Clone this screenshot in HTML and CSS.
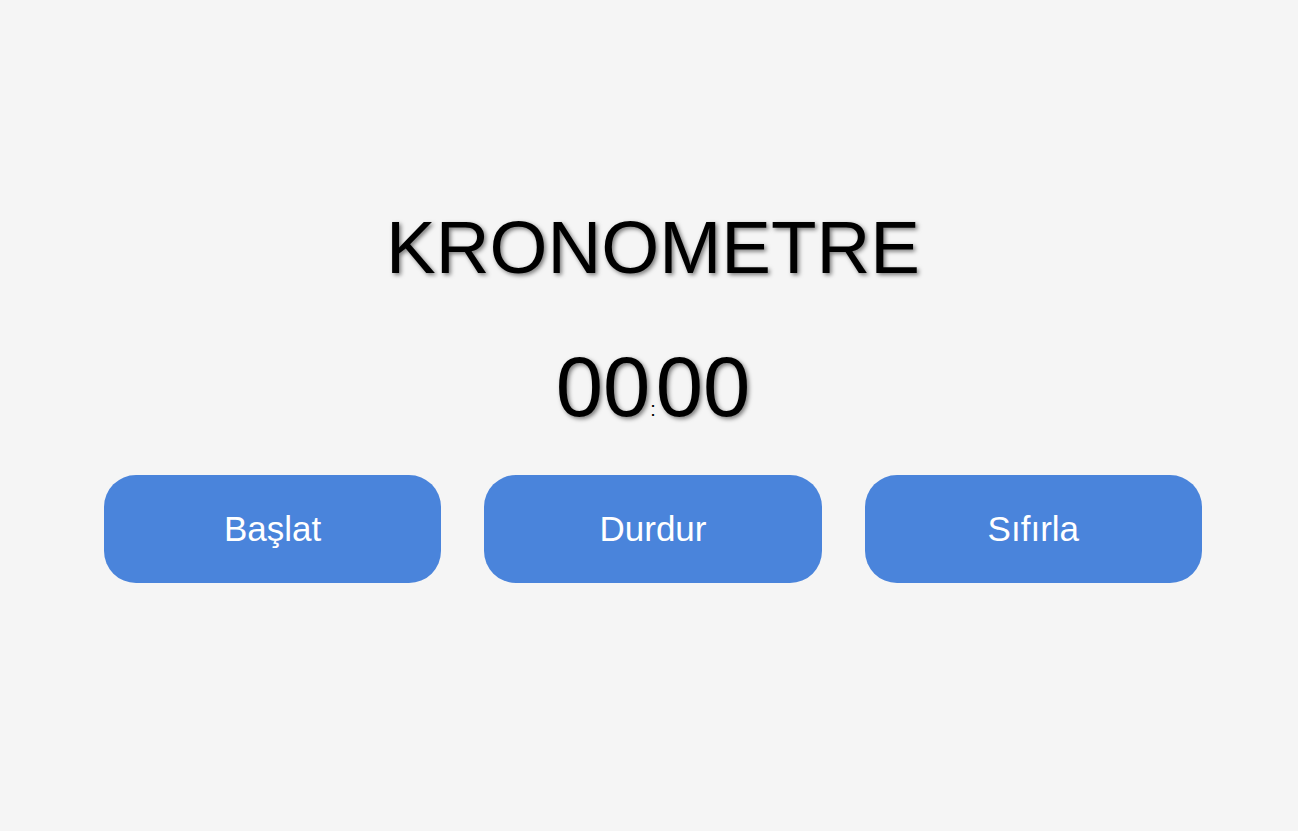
FILE: index.html
```html
<!DOCTYPE html>
<html lang="tr">
<head>
<meta charset="utf-8">
<title>Kronometre</title>
<link rel="stylesheet" href="styles.css">
</head>
<body>
<main class="app">
  <h1 class="title">KRONOMETRE</h1>
  <div class="timer"><span>00</span><span class="sep">:</span><span>00</span></div>
  <div class="controls">
    <button class="btn">Başlat</button>
    <button class="btn">Durdur</button>
    <button class="btn">Sıfırla</button>
  </div>
</main>
</body>
</html>
```
FILE: styles.css
```css
html, body {
  margin: 0;
  padding: 0;
  background: #f5f5f5;
  font-family: "Liberation Sans", Arial, sans-serif;
}
.app {
  display: flex;
  flex-direction: column;
  align-items: center;
  padding-top: 205px;
}
.title {
  margin: 0 0 0 8px;
  font-size: 74.5px;
  font-weight: normal;
  line-height: 85px;
  color: #000;
  text-shadow: 2px 2px 4px rgba(0,0,0,0.5);
}
.timer {
  margin: 48px 0 0 8px;
  font-size: 85px;
  line-height: 98px;
  color: #000;
  text-shadow: 2px 2px 4px rgba(0,0,0,0.5);
}
.timer .sep {
  font-size: 20px;
  line-height: 0;
  text-shadow: none;
}
.controls {
  align-self: stretch;
  display: flex;
  gap: 43px;
  padding: 0 96px 0 104px;
  margin-top: 39px;
}
.btn {
  flex: 1;
  height: 108px;
  border: none;
  border-radius: 32px;
  background: #4a84db;
  color: #fff;
  font-family: "Liberation Sans", Arial, sans-serif;
  font-size: 35px;
}
```
